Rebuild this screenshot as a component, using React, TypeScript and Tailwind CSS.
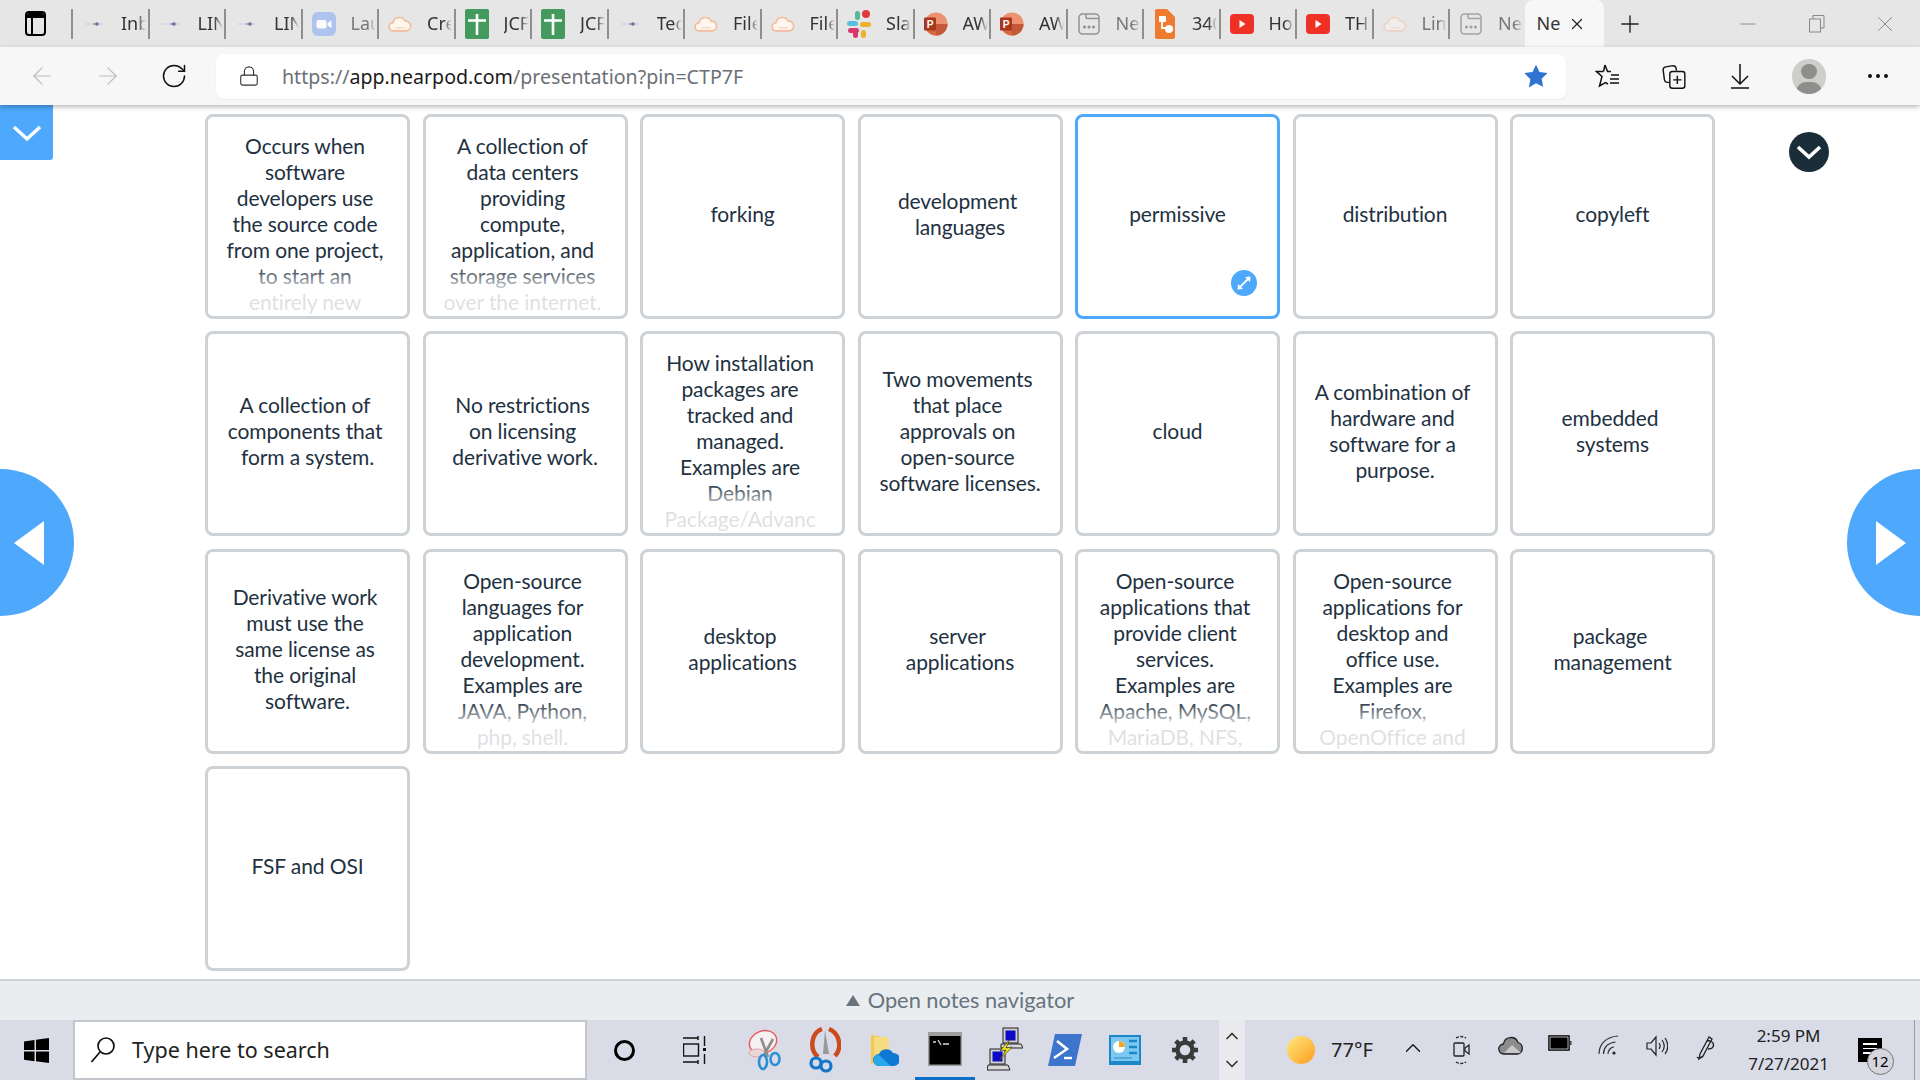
import { ReactNode } from "react";
import {
  ArrowLeft,
  ArrowRight,
  ChevronDown,
  ChevronUp,
  Lock,
  Minus,
  Plus,
  RotateCw,
  X,
} from "lucide-react";

const windowsFont = { fontFamily: '"Noto Sans", sans-serif' };

// --- Favicons ---
const Dots = () => (
  <svg width="18" height="6" viewBox="0 0 18 6">
    <path d="M0 3h8" stroke="#c6cfdf" strokeWidth="1.4" strokeDasharray="1.5 1" />
    <path d="M8 3h4" stroke="#8f97b5" strokeWidth="1.6" />
    <circle cx="12" cy="3" r="1.8" fill="#6a7296" />
    <path d="M14 3h3" stroke="#c6cfdf" strokeWidth="1.4" />
  </svg>
);
const Zoom = () => (
  <svg width="24" height="24" viewBox="0 0 24 24">
    <rect width="24" height="24" rx="6" fill="#a8c1f0" />
    <rect x="4.5" y="8" width="10" height="8.5" rx="2" fill="#fff" />
    <path d="M15.5 11l4-2.5v7.5l-4-2.5z" fill="#fff" />
  </svg>
);
const Cloud = ({ pale = false }: { pale?: boolean }) => (
  <svg width="26" height="18" viewBox="0 0 26 18" opacity={pale ? 0.45 : 1}>
    <path
      d="M6 16.5a4.5 4.5 0 0 1-.6-9A7 7 0 0 1 18.6 6a5.3 5.3 0 0 1 1.4 10.5z"
      fill="#fff6f0"
      stroke="#f3bb98"
      strokeWidth="1.8"
    />
    <path d="M8 13h10" stroke="#f6d8c4" strokeWidth="1.5" />
  </svg>
);
const Sheet = () => (
  <svg width="24" height="30" viewBox="0 0 24 30">
    <rect width="24" height="30" rx="2" fill="#439a5c" />
    <path d="M3 11.5h18M12 5v21" stroke="#fff" strokeWidth="2.6" />
  </svg>
);
const Slack = () => (
  <svg width="24" height="30" viewBox="0 0 24 30">
    <rect x="0" y="12" width="11" height="5" rx="2.5" fill="#58c0dc" />
    <rect x="8" y="2" width="5" height="9" rx="2.5" fill="#58b89a" />
    <rect x="15" y="1" width="8" height="8" rx="4" fill="#e03a3e" />
    <rect x="13" y="13" width="11" height="5" rx="2.5" fill="#ecb22e" />
    <rect x="14" y="21" width="5" height="8" rx="2.5" fill="#ecb22e" />
    <rect x="1" y="19" width="11" height="5" rx="2.5" fill="#d9386c" />
    <rect x="6" y="22" width="5" height="7" rx="2.5" fill="#d9386c" />
  </svg>
);
const Ppt = () => (
  <svg width="26" height="28" viewBox="0 0 26 28">
    <circle cx="13" cy="14" r="12.5" fill="#ed9270" />
    <path d="M13 14h12.5A12.5 12.5 0 0 1 13 26.5z" fill="#c5573a" />
    <path d="M13 14V26.5A12.5 12.5 0 0 1 1 14z" fill="#d9683f" />
    <rect x="0" y="7" width="13" height="14" rx="1" fill="#a8371e" />
    <text x="3" y="18" fontSize="11" fontWeight="700" fill="#fff" fontFamily="Liberation Sans, sans-serif">
      P
    </text>
  </svg>
);
const WinDots = ({ pale = false }: { pale?: boolean }) => (
  <svg width="22" height="22" viewBox="0 0 22 22" fill="none" stroke={pale ? "#9a9a9a" : "#8a8a8a"} strokeWidth="1.5">
    <rect x="1" y="1" width="20" height="20" rx="3.5" />
    <path d="M8 1v3.5a1 1 0 0 0 1 1h12" />
    <circle cx="6.5" cy="14" r=".8" fill="#777" />
    <circle cx="11" cy="14" r=".8" fill="#777" />
    <circle cx="15.5" cy="14" r=".8" fill="#777" />
  </svg>
);
const Flow = () => (
  <svg width="20" height="30" viewBox="0 0 20 30">
    <path d="M2 0h10l8 8v20a2 2 0 0 1-2 2H2a2 2 0 0 1-2-2V2a2 2 0 0 1 2-2z" fill="#ef7b2f" />
    <rect x="4" y="7" width="7" height="6" fill="#fff" />
    <path d="M7 13v6h5" stroke="#fff" strokeWidth="1.8" fill="none" />
    <circle cx="14" cy="20" r="4" fill="#fff" />
  </svg>
);
const Youtube = () => (
  <svg width="24" height="20" viewBox="0 0 24 20">
    <rect width="24" height="20" rx="4" fill="#ee3124" />
    <path d="M9.5 6l6 4-6 4z" fill="#fff" />
  </svg>
);

const tabs: { icon: ReactNode; label: string; faded?: boolean }[] = [
  { icon: <Dots />, label: "Inb" },
  { icon: <Dots />, label: "LIN" },
  { icon: <Dots />, label: "LIN" },
  { icon: <Zoom />, label: "Lau", faded: true },
  { icon: <Cloud />, label: "Cre" },
  { icon: <Sheet />, label: "JCF" },
  { icon: <Sheet />, label: "JCF" },
  { icon: <Dots />, label: "Tec" },
  { icon: <Cloud />, label: "File" },
  { icon: <Cloud />, label: "File" },
  { icon: <Slack />, label: "Sla" },
  { icon: <Ppt />, label: "AW" },
  { icon: <Ppt />, label: "AW" },
  { icon: <WinDots />, label: "Ne", faded: true },
  { icon: <Flow />, label: "340" },
  { icon: <Youtube />, label: "Ho" },
  { icon: <Youtube />, label: "TH" },
  { icon: <Cloud pale />, label: "Lin", faded: true },
  { icon: <WinDots pale />, label: "Ne", faded: true },
];

// --- Cards ---
type Card = { lines: string[]; clipped?: boolean; selected?: boolean };

const cards: Card[] = [
  {
    lines: ["Occurs when", "software", "developers use", "the source code", "from one project,", "to start an", "entirely new"],
    clipped: true,
  },
  {
    lines: ["A collection of", "data centers", "providing", "compute,", "application, and", "storage services", "over the internet."],
    clipped: true,
  },
  { lines: ["forking"] },
  { lines: ["development", "languages"] },
  { lines: ["permissive"], selected: true },
  { lines: ["distribution"] },
  { lines: ["copyleft"] },
  { lines: ["A collection of", "components that", "form a system."] },
  { lines: ["No restrictions", "on licensing", "derivative work."] },
  {
    lines: ["How installation", "packages are", "tracked and", "managed.", "Examples are", "Debian", "Package/Advanc"],
    clipped: true,
  },
  { lines: ["Two movements", "that place", "approvals on", "open-source", "software licenses."] },
  { lines: ["cloud"] },
  { lines: ["A combination of", "hardware and", "software for a", "purpose."] },
  { lines: ["embedded", "systems"] },
  { lines: ["Derivative work", "must use the", "same license as", "the original", "software."] },
  {
    lines: ["Open-source", "languages for", "application", "development.", "Examples are", "JAVA, Python,", "php, shell."],
    clipped: true,
  },
  { lines: ["desktop", "applications"] },
  { lines: ["server", "applications"] },
  {
    lines: ["Open-source", "applications that", "provide client", "services.", "Examples are", "Apache, MySQL,", "MariaDB, NFS,"],
    clipped: true,
  },
  {
    lines: ["Open-source", "applications for", "desktop and", "office use.", "Examples are", "Firefox,", "OpenOffice and"],
    clipped: true,
  },
  { lines: ["package", "management"] },
  { lines: ["FSF and OSI"] },
];

function MatchCard({ card }: { card: Card }) {
  return (
    <div
      className={`relative h-[205px] w-[205px] rounded-lg border-[3px] bg-white overflow-hidden flex flex-col items-center text-[21px] leading-[26px] tracking-[-0.1px] text-[#22313f] ${
        card.clipped ? "justify-start pt-[16px]" : "justify-center pb-[5px]"
      } ${card.selected ? "border-[#4ea8fb]" : "border-[#cdd2d6]"}`}
    >
      {card.lines.map((line, i) => (
        <div
          key={i}
          className={`whitespace-nowrap ${card.clipped || i < card.lines.length - 1 ? "pr-[5px]" : ""}`}
        >
          {line}
        </div>
      ))}
      {card.clipped && (
        <div className="absolute bottom-0 left-0 right-0 h-[50px] bg-gradient-to-b from-white/0 via-white/85 via-50% to-white/85" />
      )}
      {card.selected && (
        <div className="absolute right-[20px] bottom-[20px] h-[26px] w-[26px] rounded-full bg-[#4ea8fb] flex items-center justify-center">
          <svg width="16" height="16" viewBox="0 0 16 16" fill="none" stroke="#fff" strokeWidth="1.8">
            <path d="M4 12l8-8" />
            <path d="M1.5 14.5L2 9l5 5zM14.5 1.5L14 7 9 2z" fill="#fff" stroke="none" />
          </svg>
        </div>
      )}
    </div>
  );
}

// --- Taskbar icons ---
const WindowsLogo = () => (
  <svg width="25" height="25" viewBox="0 0 25 25" fill="#000">
    <path d="M0 3.5l10.5-1.5v10H0zM12 1.8L25 0v12H12zM0 13.5h10.5v9.7L0 21.7zM12 13.5h13V25l-13-1.8z" />
  </svg>
);
const SearchGlass = () => (
  <svg width="26" height="28" viewBox="0 0 26 28" fill="none" stroke="#111" strokeWidth="1.7">
    <circle cx="16" cy="10" r="8" />
    <path d="M10 16L1.5 26" />
  </svg>
);
const TaskView = () => (
  <svg width="24" height="28" viewBox="0 0 24 28" fill="none" stroke="#111" strokeWidth="1.4">
    <path d="M0 2h15M15 0v4M0 26h15M15 24v4" />
    <rect x="0.5" y="8" width="15" height="12" />
    <path d="M21.5 0v10M21.5 18v10" />
    <rect x="20" y="12" width="3" height="3" fill="#111" stroke="none" />
  </svg>
);
const Snip = () => (
  <svg width="34" height="42" viewBox="0 0 34 42" fill="none">
    <ellipse cx="15" cy="13" rx="14" ry="11" transform="rotate(-22 15 13)" fill="#f6f0f0" stroke="#e8595c" strokeWidth="1.4" />
    <ellipse cx="9" cy="24" rx="8" ry="4" fill="#e9d8da" stroke="#e8a0a2" />
    <path d="M13 9l7 19M25 10l-9 16" stroke="#8c8c8c" strokeWidth="2.6" />
    <ellipse cx="15" cy="33" rx="4" ry="7" stroke="#2a8fd4" strokeWidth="2.6" />
    <ellipse cx="27" cy="30" rx="4.5" ry="6" stroke="#2a8fd4" strokeWidth="2.6" />
  </svg>
);
const Scissors = () => (
  <svg width="32" height="46" viewBox="0 0 32 46" fill="none">
    <path d="M9 30C0 22 2 6 13 2M20 2c10 4 14 18 6 27" stroke="#cc4a1d" strokeWidth="4.5" />
    <path d="M16 3l-2 24h6z" fill="#9a9a9a" />
    <circle cx="7" cy="36" r="5" stroke="#1477c9" strokeWidth="3.2" />
    <circle cx="17" cy="39" r="5" stroke="#1477c9" strokeWidth="3.2" />
  </svg>
);
const FolderCloud = () => (
  <svg width="28" height="34" viewBox="0 0 28 34">
    <path d="M0 2l11 2v24L0 31z" fill="#f2c94f" />
    <path d="M3 4h14l2 20H3z" fill="#f7dc7f" />
    <path d="M8 33a6 6 0 0 1 0-12 8 8 0 0 1 14-1 6.5 6.5 0 0 1 1 13z" fill="#0f78d4" />
    <path d="M8 33a6 6 0 0 1-1-11.8L20 33z" fill="#28a8ea" />
  </svg>
);
const Cmd = () => (
  <svg width="34" height="34" viewBox="0 0 34 34">
    <rect width="34" height="34" fill="#9d9d9d" />
    <rect x="1.5" y="4" width="31" height="28.5" fill="#000" />
    <path d="M5 10h3M10 8l3 5M15 12h6" stroke="#d8d8d8" strokeWidth="1.3" />
  </svg>
);
const Putty = () => (
  <svg width="36" height="46" viewBox="0 0 36 46">
    <rect x="16" y="1" width="15" height="15" fill="#d0d0d0" stroke="#222" />
    <rect x="18.5" y="3.5" width="10" height="10" fill="#0a0ac8" />
    <path d="M14 17h20l2 4H14z" fill="#d8d8d8" stroke="#222" />
    <rect x="3" y="22" width="15" height="15" fill="#d0d0d0" stroke="#222" />
    <rect x="5.5" y="24.5" width="10" height="10" fill="#0a0ac8" />
    <path d="M1 38h20l2 5H0z" fill="#d8d8d8" stroke="#222" />
    <path d="M23 12l-10 12 6-1-7 11 13-14-6 1z" fill="#f7e51c" stroke="#222" strokeWidth=".6" />
  </svg>
);
const PowerShell = () => (
  <svg width="34" height="32" viewBox="0 0 34 32">
    <path d="M7 0h27l-7 32H0z" fill="#3d74cc" />
    <path d="M9 7l10 8-13 9" fill="none" stroke="#fff" strokeWidth="2.6" />
    <path d="M16 24h8" stroke="#fff" strokeWidth="2.4" />
  </svg>
);
const ControlPanel = () => (
  <svg width="32" height="30" viewBox="0 0 32 30">
    <rect width="32" height="30" fill="#1c86c9" />
    <rect x="2" y="2" width="28" height="24" fill="#7cc8ef" />
    <circle cx="10" cy="12" r="6" fill="#fff" />
    <path d="M10 12V6a6 6 0 0 1 6 6z" fill="#f5a524" />
    <path d="M20 6h8M20 12h8M20 18h8" stroke="#1c86c9" strokeWidth="2.5" />
    <path d="M5 23h18" stroke="#3e9fd8" strokeWidth="1.5" />
  </svg>
);
const Gear = () => (
  <svg width="28" height="28" viewBox="0 0 28 28" fill="none" stroke="#3a3a3a">
    <circle cx="14" cy="14" r="7.5" strokeWidth="4.5" />
    <path
      d="M14 1v5M14 22v5M1 14h5M22 14h5M4.8 4.8l3.5 3.5M19.7 19.7l3.5 3.5M4.8 23.2l3.5-3.5M19.7 8.3l3.5-3.5"
      strokeWidth="4.5"
    />
  </svg>
);
const MeetNow = () => (
  <svg width="18" height="30" viewBox="0 0 18 30" fill="none" stroke="#222" strokeWidth="1.3">
    <path d="M3 3c3-2 7-2 10 0M3 27c3 2 7 2 10 0" strokeDasharray="3 1.5" />
    <rect x="1" y="8" width="10" height="13" rx="1" />
    <path d="M12 13l4-3v9l-4-3z" />
  </svg>
);
const OneDrive = () => (
  <svg width="26" height="20" viewBox="0 0 26 20">
    <path d="M6 19a5 5 0 0 1-.5-10A7.5 7.5 0 0 1 20 7.5 6 6 0 0 1 20 19z" fill="#8d8d8d" stroke="#222" strokeWidth="1.3" />
    <path d="M6 18l8-8 9 8z" fill="#c9c9c9" />
  </svg>
);
const Battery = () => (
  <svg width="24" height="16" viewBox="0 0 24 16">
    <rect x=".8" y=".8" width="20.4" height="14.4" fill="#000" stroke="#000" />
    <rect x="2" y="2" width="18" height="12" fill="#000" stroke="#fff" strokeWidth=".7" />
    <rect x="22" y="6" width="1.5" height="4" fill="#444" />
  </svg>
);
const Wifi = () => (
  <svg width="22" height="20" viewBox="0 0 22 20" fill="none" stroke="#333" strokeWidth="1.2">
    <path d="M1 19C1 9 8 2 20 1M5.5 19c0-7 4.5-11 12-12M10 19c0-4 3-7 6-7" />
    <circle cx="16" cy="18" r="1.6" fill="#222" stroke="none" />
  </svg>
);
const Volume = () => (
  <svg width="22" height="22" viewBox="0 0 22 22" fill="none" stroke="#222" strokeWidth="1.2">
    <path d="M1 8h4l5-6v18l-5-6H1z" />
    <path d="M13 8c1.5 2 1.5 4 0 6M16 5c3 4 3 8 0 12M19 3c3.5 5 3.5 11 0 16" />
  </svg>
);
const Pen = () => (
  <svg width="20" height="26" viewBox="0 0 20 26" fill="none" stroke="#222" strokeWidth="1.3">
    <path d="M13 2L4 19l-1 5 4-3 9-17zM11 6c4-1 8 2 6 6-1 2-3 2-5 2" />
    <path d="M1 22c2 3 4-1 6 0" />
  </svg>
);

const taskIcons = [
  { node: <div className="h-[21px] w-[21px] rounded-full border-[3px] border-black" />, extra: "" },
  { node: <TaskView />, extra: "ml-[11px]" },
  { node: <Snip />, extra: "ml-[10px]" },
  { node: <Scissors />, extra: "" },
  { node: <FolderCloud />, extra: "" },
  { node: <Cmd />, extra: "border-b-[3px] border-[#0f6fc6]" },
  { node: <Putty />, extra: "" },
  { node: <PowerShell />, extra: "" },
  { node: <ControlPanel />, extra: "" },
  { node: <Gear />, extra: "" },
];

const trayIcons = [
  <ChevronUp key="u" size={26} strokeWidth={1.2} color="#111" />,
  <MeetNow key="m" />,
  <OneDrive key="o" />,
  <Battery key="b" />,
  <Wifi key="w" />,
  <Volume key="v" />,
  <Pen key="pen" />,
];

export default function App() {
  return (
    <div className="relative flex h-screen w-full flex-col overflow-hidden bg-white" style={windowsFont}>
      {/* Tab strip */}
      <div className="flex h-[47px] shrink-0 items-center bg-[#e6e6e6]">
        <div className="flex w-[71px] shrink-0 justify-center">
          <div className="h-[25px] w-[21px] overflow-hidden rounded-[4px] border-2 border-black">
            <div className="h-[5px] bg-black" />
            <div className="h-full w-[6px] border-r-2 border-black" />
          </div>
        </div>
        {tabs.map((tab, i) => (
          <div key={i} className="flex h-[47px] w-[76.5px] shrink-0 items-center">
            <div className="h-[30px] w-[2px] shrink-0 bg-[#8f8f8f]" />
            <div className={`ml-[9px] mr-[15px] flex w-[24px] shrink-0 justify-center ${tab.faded ? "opacity-90" : ""}`}>
              {tab.icon}
            </div>
            <div
              className={`w-[25px] shrink-0 overflow-hidden whitespace-nowrap text-[18px] [mask-image:linear-gradient(to_right,black_65%,transparent)] ${
                tab.faded ? "text-[#777]" : "text-[#333]"
              }`}
            >
              {tab.label}
            </div>
          </div>
        ))}
        <div className="flex h-[47px] w-[79px] shrink-0 items-center rounded-t-lg bg-[#f7f7f7] pl-[12px]">
          <span className="w-[26px] overflow-hidden text-[18px] text-[#333]">Ne</span>
          <X size={18} strokeWidth={1.6} className="ml-[5px] text-[#222]" />
        </div>
        <Plus size={28} strokeWidth={1.2} className="ml-[12px] text-[#222]" />
        <Minus size={24} strokeWidth={0.9} className="ml-[92px] text-[#888]" />
        <svg width="16" height="18" viewBox="0 0 16 18" fill="none" stroke="#888" className="ml-[49px]">
          <rect x=".5" y="4" width="11" height="13" />
          <path d="M4 4V.5h11V13h-3.5" />
        </svg>
        <X size={26} strokeWidth={0.9} className="ml-[47px] text-[#888]" />
      </div>

      {/* Address bar */}
      <div className="relative z-10 flex h-[58px] shrink-0 items-center bg-[#f7f7f7] pl-[9px] shadow-[0_2px_5px_rgba(0,0,0,0.28)]">
        <div className="flex w-[66px] justify-center">
          <ArrowLeft size={28} strokeWidth={1} className="text-[#bcbcbc]" />
        </div>
        <div className="flex w-[66px] justify-center">
          <ArrowRight size={28} strokeWidth={1} className="text-[#bcbcbc]" />
        </div>
        <div className="flex w-[66px] justify-center">
          <RotateCw size={28} strokeWidth={1.3} className="text-[#111]" />
        </div>
        <div className="ml-[9px] flex h-[45px] w-[1350px] items-center rounded-lg bg-white shadow-[0_1px_2px_rgba(0,0,0,0.06)]">
          <Lock size={22} strokeWidth={1.2} className="ml-[22px] mr-[22px] text-[#333]" />
          <div className="whitespace-nowrap pt-[1px] text-[19.6px] text-[#6b7076]">
            https://<span className="text-[#1b1b1b]">app.nearpod.com</span>/presentation?pin=CTP7F
          </div>
          <svg width="26" height="26" viewBox="0 0 24 24" className="ml-auto mr-[17px]" fill="#2f74d0">
            <path d="M12 1.5l3.2 6.9 7.5.9-5.500 5.200 1.400 7.500L12 18.700l-6.600 3.800 1.400-7.500L1.300 9.300l7.500-.9z" />
          </svg>
        </div>
        <div className="ml-[9px] flex w-[66px] justify-center">
          <svg width="26" height="26" viewBox="0 0 26 26" fill="none" stroke="#111" strokeWidth="1.5">
            <path d="M10 2l2.500 6.500H16M8.500 8.500H1.500l5.500 5L4.500 23l6-3.500L13 21" />
            <path d="M10 2L8.500 8.500M16 12h8M15 16h9M15 20h9" />
          </svg>
        </div>
        <div className="flex w-[66px] justify-center">
          <svg width="24" height="25" viewBox="0 0 28 30" fill="none" stroke="#111" strokeWidth="1.7">
            <path d="M9 22H6c-2 0-3-1-3.500-3L1 7c0-2 1-3 3-3.500L13 2c2 0 3 1 3.500 3l.5 3" />
            <rect x="9" y="9" width="18" height="20" rx="3" />
            <path d="M18 14v10M13 19h10" />
          </svg>
        </div>
        <div className="flex w-[66px] justify-center">
          <svg width="20" height="26" viewBox="0 0 20 26" fill="none" stroke="#111" strokeWidth="1.5">
            <path d="M10 1v20M2 13l8 8 8-8M1 25h18" />
          </svg>
        </div>
        <div className="flex w-[70px] justify-center pl-[1px]">
          <div className="relative h-[35px] w-[34px] overflow-hidden rounded-full bg-[#cfcecb]">
            <div className="absolute left-[9px] top-[5px] h-[15px] w-[16px] rounded-full bg-[#8e8e8e]" />
            <div className="absolute left-[4px] top-[23px] h-[20px] w-[26px] rounded-full bg-[#8e8e8e]" />
          </div>
        </div>
        <div className="flex w-[70px] justify-center gap-[4px]">
          <div className="h-[4px] w-[4px] rounded-full bg-[#111]" />
          <div className="h-[4px] w-[4px] rounded-full bg-[#111]" />
          <div className="h-[4px] w-[4px] rounded-full bg-[#111]" />
        </div>
      </div>

      {/* Slide */}
      <div
        className="relative min-h-0 flex-1 bg-white pl-[205px] pt-[9px]"
        style={{ fontFamily: 'Lato, "Noto Sans", sans-serif' }}
      >
        <div className="grid grid-cols-[repeat(7,205px)] gap-x-[12.5px] gap-y-[12.4px]">
          {cards.map((card, i) => (
            <MatchCard key={i} card={card} />
          ))}
        </div>

        <div className="absolute left-0 top-0 flex h-[55px] w-[53px] items-center justify-center rounded-br-[3px] bg-[#4ea8fb]">
          <svg width="30" height="18" viewBox="0 0 30 18" fill="none" stroke="#fff" strokeWidth="3.4">
            <path d="M2 3l13 12L28 3" />
          </svg>
        </div>
        <div className="absolute left-[1789px] top-[27px] flex h-[40px] w-[40px] items-center justify-center rounded-full bg-[#1c2d3a]">
          <svg width="26" height="16" viewBox="0 0 26 16" fill="none" stroke="#fff" strokeWidth="3.6">
            <path d="M2 3l11 10L24 3" />
          </svg>
        </div>
        <div className="absolute left-[-73px] top-[364px] flex h-[147px] w-[147px] items-center justify-end rounded-full bg-[#4ea8fb] pr-[30px]">
          <div className="h-0 w-0 border-y-[22px] border-r-[30px] border-y-transparent border-r-white" />
        </div>
        <div className="absolute left-[1847px] top-[364px] flex h-[147px] w-[147px] items-center rounded-full bg-[#4ea8fb] pl-[29px]">
          <div className="h-0 w-0 border-y-[22px] border-l-[30px] border-y-transparent border-l-white" />
        </div>
      </div>

      {/* Notes */}
      <div
        className="flex h-[41px] shrink-0 items-center justify-center gap-[8px] border-t-2 border-[#cfd4d8] bg-[#e9edf0] text-[21.8px] text-[#67737d] shadow-[0_-2px_4px_rgba(0,0,0,0.08)]"
        style={{ fontFamily: 'Lato, "Noto Sans", sans-serif' }}
      >
        <div className="h-0 w-0 border-x-[7.5px] border-b-[11px] border-x-transparent border-b-[#67737d]" />
        <span>Open notes navigator</span>
      </div>

      {/* Taskbar */}
      <div className="flex h-[60px] shrink-0 items-center bg-[#d9dbe7] text-[#222]">
        <div className="flex w-[73px] justify-center">
          <WindowsLogo />
        </div>
        <div className="flex h-[60px] w-[514px] items-center border-2 border-[#c5c6cc] bg-white pl-[15px]">
          <SearchGlass />
          <span className="ml-[16px] text-[21.5px] text-[#222]">Type here to search</span>
        </div>
        <div className="ml-[7px] flex">
          {taskIcons.map((icon, i) => (
            <div key={i} className={`flex h-[60px] w-[60px] items-center justify-center ${icon.extra}`}>
              {icon.node}
            </div>
          ))}
        </div>
        <div className="ml-[4px] flex h-[60px] w-[26px] flex-col items-center justify-between bg-[#e9e9ee] py-[6px]">
          <ChevronUp size={20} strokeWidth={2} className="text-[#333]" />
          <ChevronDown size={20} strokeWidth={2} className="text-[#333]" />
        </div>
        <div className="ml-[42px] h-[28px] w-[28px] rounded-full bg-gradient-to-br from-[#ffe97a] to-[#fb9c0d]" />
        <span className="ml-[16px] w-[40px] whitespace-nowrap text-[20px]">77°F</span>
        <div className="ml-[18px] flex">
          {trayIcons.map((icon, i) => (
            <div key={i} className="flex w-[48.8px] justify-center">
              {icon}
            </div>
          ))}
        </div>
        <div className="ml-[8px] flex w-[100px] flex-col items-center text-[17px] leading-[28px]">
          <span>2:59 PM</span>
          <span>7/27/2021</span>
        </div>
        <div className="relative ml-[19px] h-[24px] w-[24px] bg-black">
          <div className="mx-[5px] mt-[5px] h-[1.5px] bg-white" />
          <div className="mx-[5px] mt-[3px] h-[1.5px] bg-white" />
          <div className="mx-[5px] mt-[3px] h-[1.5px] bg-white" />
          <div className="absolute left-[9px] top-[10px] flex h-[27px] w-[27px] items-center justify-center rounded-full border border-[#777] bg-[#d5d6dd] text-[15px] text-black">
            12
          </div>
        </div>
        <div className="ml-auto mr-[5px] h-[60px] w-[1px] bg-[#9a9a9f]" />
      </div>
    </div>
  );
}
